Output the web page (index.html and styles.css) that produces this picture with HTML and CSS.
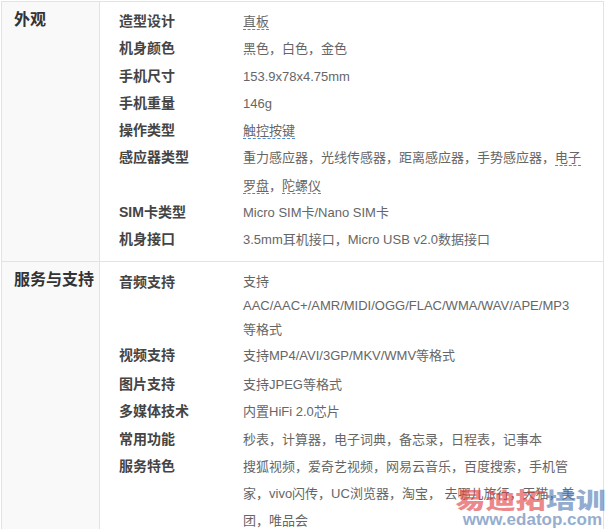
FILE: index.html
```html
<!DOCTYPE html>
<html lang="zh-CN">
<head>
    <meta charset="UTF-8">
    <title>规格参数</title>
    <link rel="stylesheet" href="styles.css">
</head>
<body>
    <div class="spec-table">
        <div class="spec-group">
            <div class="group-name">外观</div>
            <div class="group-items">
                <div class="spec-row"><div class="spec-label">造型设计</div><div class="spec-value"><span class="term">直板</span></div></div>
                <div class="spec-row"><div class="spec-label">机身颜色</div><div class="spec-value">黑色，白色，金色</div></div>
                <div class="spec-row"><div class="spec-label">手机尺寸</div><div class="spec-value">153.9x78x4.75mm</div></div>
                <div class="spec-row"><div class="spec-label">手机重量</div><div class="spec-value">146g</div></div>
                <div class="spec-row"><div class="spec-label">操作类型</div><div class="spec-value"><span class="term">触控按键</span></div></div>
                <div class="spec-row"><div class="spec-label">感应器类型</div><div class="spec-value">重力感应器，光线传感器，距离感应器，手势感应器，<span class="term">电子</span><br><span class="term">罗盘</span>，<span class="term">陀螺仪</span></div></div>
                <div class="spec-row"><div class="spec-label">SIM卡类型</div><div class="spec-value">Micro SIM卡/Nano SIM卡</div></div>
                <div class="spec-row"><div class="spec-label">机身接口</div><div class="spec-value">3.5mm耳机接口，Micro USB v2.0数据接口</div></div>
            </div>
        </div>
        <div class="spec-group">
            <div class="group-name">服务与支持</div>
            <div class="group-items">
                <div class="spec-row audio-row"><div class="spec-label">音频支持</div><div class="spec-value">支持<br>AAC/AAC+/AMR/MIDI/OGG/FLAC/WMA/WAV/APE/MP3<br>等格式</div></div>
                <div class="spec-row video-row"><div class="spec-label">视频支持</div><div class="spec-value">支持MP4/AVI/3GP/MKV/WMV等格式</div></div>
                <div class="spec-row"><div class="spec-label">图片支持</div><div class="spec-value">支持JPEG等格式</div></div>
                <div class="spec-row"><div class="spec-label">多媒体技术</div><div class="spec-value">内置HiFi 2.0芯片</div></div>
                <div class="spec-row"><div class="spec-label">常用功能</div><div class="spec-value">秒表，计算器，电子词典，备忘录，日程表，记事本</div></div>
                <div class="spec-row"><div class="spec-label">服务特色</div><div class="spec-value">搜狐视频，爱奇艺视频，网易云音乐，百度搜索，手机管<br>家，vivo闪传，UC浏览器，淘宝， 去哪儿旅行，天猫，美<br>团，唯品会</div></div>
            </div>
        </div>
    </div>

    <div class="watermark">
        <div class="wm-logo"><span class="wm-red">易迪拓</span><span class="wm-blue">培训</span></div>
        <div class="wm-url">www.edatop.com</div>
    </div>
</body>
</html>
```

FILE: styles.css
```css
* {
    margin: 0;
    padding: 0;
    box-sizing: border-box;
}

body {
    font-family: "Liberation Sans", "Noto Sans CJK SC", sans-serif;
    font-size: 13px;
    color: #666;
    background: #fff;
    padding: 1px 0 0 1px;
    position: relative;
    height: 529px;
    overflow: hidden;
}

.spec-table {
    width: 603px;
    border: 1px solid #e3e3e3;
    border-bottom: none;
}

.spec-group {
    display: flex;
}

.spec-group + .spec-group {
    border-top: 1px solid #e3e3e3;
}

.group-name {
    width: 98px;
    flex-shrink: 0;
    background: #f9f9f9;
    border-right: 1px solid #e3e3e3;
    padding: 9px 0 0 12px;
    font-size: 16px;
    line-height: 18px;
    font-weight: bold;
    color: #333;
}

.group-items {
    flex: 1;
    padding: 6px 0 7px;
}

.spec-row {
    display: flex;
    line-height: 27.3px;
}

.spec-label {
    width: 143px;
    flex-shrink: 0;
    padding-left: 19px;
    font-size: 14px;
    font-weight: bold;
    color: #444;
}

.spec-value {
    flex: 1;
    white-space: nowrap;
}

.audio-row {
    padding-top: 2px;
}

.audio-row .spec-value,
.audio-row .spec-label {
    line-height: 24px;
}

.video-row {
    padding-bottom: 2px;
}

.term {
    border-bottom: 1px dashed #4d8bd0;
}

/* watermark overlay */
.watermark {
    position: absolute;
    left: 455px;
    top: 485px;
    width: 151px;
    text-align: right;
    opacity: 0.6;
}

.wm-logo {
    font-family: "Noto Sans CJK SC", sans-serif;
    font-size: 22px;
    font-weight: 900;
    line-height: 26px;
    white-space: nowrap;
    transform: scaleX(1.37);
    transform-origin: right center;
}

.wm-red {
    color: #e23a3d;
}

.wm-blue {
    color: #4a76b4;
}

.wm-url {
    font-family: "Liberation Sans", sans-serif;
    font-size: 17px;
    font-weight: bold;
    line-height: 17px;
    color: #4f78b2;
    padding-right: 4px;
}
```
